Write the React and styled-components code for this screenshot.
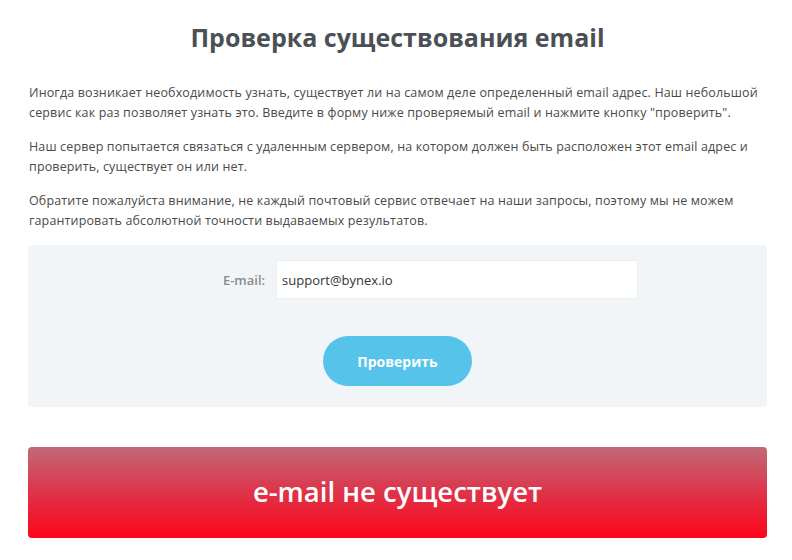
import React from 'react';
import styled, { createGlobalStyle } from 'styled-components';

const GlobalStyle = createGlobalStyle`
  html, body {
    margin: 0;
    padding: 0;
    background: #ffffff;
  }
  body {
    font-family: "Open Sans", "Liberation Sans", sans-serif;
  }
`;

const Page = styled.div`
  width: 739px;
  margin-left: 28px;
  padding-top: 20px;
`;

const Title = styled.h1`
  margin: 0;
  text-align: center;
  font-family: "Open Sans", "Liberation Sans", sans-serif;
  font-weight: 700;
  font-size: 25px;
  line-height: 34px;
  color: #4b4f56;
`;

const Text = styled.p`
  margin: 0 0 14px;
  padding-left: 1px;
  font-family: "Open Sans", "Liberation Sans", sans-serif;
  font-size: 12.5px;
  letter-spacing: 0.14px;
  line-height: 20px;
  color: #4a4a4a;
`;

const Intro = styled.div`
  margin-top: 29px;
`;

const FormBox = styled.form`
  margin-top: 12px;
  height: 162px;
  box-sizing: border-box;
  padding-top: 15px;
  background: #f2f5f7;
  border-radius: 4px;
  display: flex;
  flex-direction: column;
  align-items: center;
`;

const Row = styled.div`
  display: flex;
  align-items: center;
  gap: 11px;
  margin-left: 66px;
`;

const Label = styled.label`
  font-family: "Open Sans", "Liberation Sans", sans-serif;
  font-size: 13px;
  font-weight: 600;
  color: #8a8c8e;
`;

const Input = styled.input`
  width: 362px;
  height: 39px;
  box-sizing: border-box;
  padding: 0 5px;
  border: 1px solid #eceef0;
  background: #ffffff;
  font-family: "Open Sans", "Liberation Sans", sans-serif;
  font-size: 13px;
  color: #333;
  outline: none;
`;

const CheckButton = styled.button`
  margin-top: 37px;
  width: 149px;
  height: 50px;
  border: none;
  border-radius: 25px;
  background: #55c3ea;
  color: #ffffff;
  font-family: "Open Sans", "Liberation Sans", sans-serif;
  font-weight: 700;
  font-size: 14px;
  cursor: pointer;
`;

const Result = styled.div`
  margin-top: 40px;
  height: 91px;
  padding-bottom: 3px;
  box-sizing: border-box;
  border-radius: 4px;
  background: linear-gradient(to bottom, #c06a78 0%, #de3349 50%, #ff0519 100%);
  display: flex;
  align-items: center;
  justify-content: center;
  color: #ffffff;
  font-family: "Open Sans", "Liberation Sans", sans-serif;
  font-weight: 600;
  font-size: 27.5px;
`;

export default function App() {
  return (
    <>
      <GlobalStyle />
      <Page>
        <Title>Проверка существования email</Title>
        <Intro>
          <Text>
            Иногда возникает необходимость узнать, существует ли на самом деле определенный email адрес. Наш небольшой
            сервис как раз позволяет узнать это. Введите в форму ниже проверяемый email и нажмите кнопку "проверить".
          </Text>
          <Text>
            Наш сервер попытается связаться с удаленным сервером, на котором должен быть расположен этот email адрес и
            проверить, существует он или нет.
          </Text>
          <Text>
            Обратите пожалуйста внимание, не каждый почтовый сервис отвечает на наши запросы, поэтому мы не можем
            гарантировать абсолютной точности выдаваемых результатов.
          </Text>
        </Intro>
        <FormBox onSubmit={(e) => e.preventDefault()}>
          <Row>
            <Label htmlFor="email">E-mail:</Label>
            <Input id="email" defaultValue="support@bynex.io" />
          </Row>
          <CheckButton type="submit">Проверить</CheckButton>
        </FormBox>
        <Result>e-mail не существует</Result>
      </Page>
    </>
  );
}
